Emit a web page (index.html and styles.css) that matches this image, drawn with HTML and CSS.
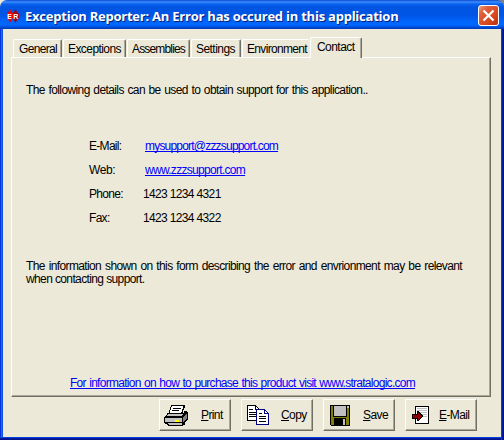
FILE: index.html
```
<!DOCTYPE html>
<html lang="en">
<head>
<meta charset="utf-8">
<title>Exception Reporter</title>
<link rel="stylesheet" href="styles.css">
</head>
<body>
<div class="window">
  <header class="titlebar">
    <svg class="app-icon" width="14" height="16" viewBox="0 0 14 16">
      <path d="M4 1L5.500 4L7 5V10L5.500 12L4 15L2.500 12L1 10V5L2.500 4Z" fill="#f00000"/>
      <path d="M9.500 1L11 4L13 6V10L11 12L9.500 15L8 12L7 10V5L8 4Z" fill="#a80008"/>
      <text x="1.300" y="10.500" class="app-icon-text">E</text>
      <text x="7.300" y="10.500" class="app-icon-text">R</text>
    </svg>
    <h1 class="title">Exception Reporter: An Error has occured in this application</h1>
    <button class="close" aria-label="Close">
      <svg width="13" height="13" viewBox="0 0 13 13"><path d="M1.500 1.500L11.500 11.500M11.500 1.500L1.500 11.500" stroke="#fff" stroke-width="2.200" fill="none"/></svg>
    </button>
  </header>
  <main class="client">
    <nav class="tabs">
      <span class="tab tab-general">General</span>
      <span class="tab tab-exceptions">Exceptions</span>
      <span class="tab tab-assemblies">Assemblies</span>
      <span class="tab tab-settings">Settings</span>
      <span class="tab tab-environment">Environment</span>
      <span class="tab tab-contact active">Contact</span>
    </nav>
    <section class="panel">
      <p class="intro">The following details can be used to obtain support for this application..</p>
      <dl class="details">
        <dt>E-Mail:</dt><dd><a class="mail" href="#">mysupport@zzzsupport.com</a></dd>
        <dt class="web-label">Web:</dt><dd><a class="web" href="#">www.zzzsupport.com</a></dd>
        <dt>Phone:</dt><dd class="number">1423 1234 4321</dd>
        <dt>Fax:</dt><dd class="number">1423 1234 4322</dd>
      </dl>
      <p class="note">The information shown on this form describing the error and envrionment may be relevant when contacting support.</p>
      <a class="purchase" href="#">For information on how to purchase this product visit www.stratalogic.com</a>
    </section>
    <footer class="buttons">
      <button class="button print">
        <svg width="24" height="21" viewBox="0 0 24 21" shape-rendering="crispEdges">
          <path d="M3 8H20V6H23L24 8V14L21 18V20H19V21H4L3 19H1L0 17V12L3 9Z" fill="#000"/>
          <path d="M4 9H19L17 11H2Z" fill="#c0c0c0"/>
          <path d="M1 13H18V17H1ZM4 18H18V20H5Z" fill="#c0c0c0"/>
          <path d="M19 12L23 8V13L19 17Z" fill="#808080"/>
          <path d="M7 0H21V2L18 9H5V7Z" fill="#000"/>
          <path d="M8 1H19V3L17 8H6V7Z" fill="#fff"/>
          <path d="M9 3H17M8 5H15" stroke="#000" stroke-width="1" transform="translate(0 .5)"/>
          <path d="M11 15H15V17H11Z" fill="#ff0"/>
        </svg>
        <span class="caption"><u>P</u>rint</span>
      </button>
      <button class="button copy">
        <svg width="22" height="20" viewBox="0 0 22 20" shape-rendering="crispEdges">
          <path d="M.5 .5H8.500L12.500 4.500V15.500H.5Z" fill="#fff" stroke="#000"/>
          <path d="M8.500 .5V4.500H12.500M2 4.500H6M2 7.500H9M2 9.500H9M2 11.500H9" fill="none" stroke="#000"/>
          <path d="M9.500 4.500H17.500L21.500 8.500V19.500H9.500Z" fill="#fff" stroke="#000080"/>
          <path d="M17.500 4.500V8.500H21.500" fill="none" stroke="#000080"/>
          <path d="M12 8.500H15M12 11.500H19M12 13.500H19M12 16.500H19" stroke="#000"/>
        </svg>
        <span class="caption"><u>C</u>opy</span>
      </button>
      <button class="button save">
        <svg width="20" height="21" viewBox="0 0 20 21" shape-rendering="crispEdges">
          <path d="M0 0H20V21H1L0 20Z" fill="#000"/>
          <path d="M1 1H19V20H1Z" fill="#808000"/>
          <path d="M3 0H17V12H3Z" fill="#000"/>
          <path d="M4 1H16V11H4Z" fill="#c0c0c0"/>
          <path d="M17 1H19V3H17Z" fill="#c0c0c0"/>
          <path d="M4 13H16V21H4Z" fill="#000"/>
          <path d="M13 14H15V20H13Z" fill="#c0c0c0"/>
        </svg>
        <span class="caption"><u>S</u>ave</span>
      </button>
      <button class="button email">
        <svg width="17" height="18" viewBox="0 0 17 18" shape-rendering="crispEdges">
          <path d="M3.500 .5H16.500V17.500H3.500Z" fill="#fff" stroke="#000"/>
          <path d="M5 2.500H15M5 4.500H15M5 6.500H15M10 8.500H15M11 10.500H15" stroke="#c0c0c0"/>
          <path d="M0 8H5V5H6L11 10V11L6 15H5V13H0Z" fill="#000"/>
          <path d="M1 9H6V7L10 10L6 14V12H1Z" fill="#900000"/>
        </svg>
        <span class="caption"><u>E</u>-Mail</span>
      </button>
    </footer>
  </main>
</div>
</body>
</html>
```
FILE: styles.css
```
* { box-sizing: border-box; }
body {
  margin: 0;
  background: linear-gradient(90deg, #ece9d8 50%, #808080 50%);
  font: 12px/14px "Liberation Sans", Arial, sans-serif;
  color: #000;
}
p, dl, dd, h1 { margin: 0; }
button { font: inherit; color: inherit; padding: 0; }
a { color: #00f; text-decoration-skip-ink: none; }
.window {
  width: 504px;
  height: 440px;
  display: flex;
  flex-direction: column;
  border-radius: 7px 7px 0 0;
  overflow: hidden;
  background:
    linear-gradient(90deg, #0831d9 1px, #166aee 1px 2px, #0855dd 2px) 0 29px / 3px 408px no-repeat,
    linear-gradient(90deg, #0441d8 1px, #001da0 1px 2px, #00138c 2px) 501px 29px / 3px 411px no-repeat,
    linear-gradient(#0441d8 1px, #001da0 1px 2px, #00138c 2px) 0 437px / 504px 3px no-repeat;
}
.titlebar {
  flex: none;
  height: 29px;
  padding: 2px 5px 0 6px;
  display: flex;
  align-items: center;
  background: linear-gradient(#0a4ad0 0, #3c8cff 2px, #0a62ee 4px, #0055e2 7px, #0055e5 15px, #0064fa 21px, #0068ff 25px, #0050dc 27px, #0038b8 29px);
}
.app-icon { flex: none; }
.app-icon-text { font: bold 7px "Liberation Sans", sans-serif; fill: #fff; }
.title {
  flex: 1;
  margin-left: 5px;
  font: bold 13px/18px "Open Sans", "Noto Sans", sans-serif;
  letter-spacing: -.23px;
  color: #fff;
  text-shadow: 1px 1px #06207c;
  white-space: nowrap;
}
.close {
  flex: none;
  width: 21px;
  height: 21px;
  border: 1px solid #fff;
  border-radius: 3px;
  background: linear-gradient(135deg, #f0a080 0, #e0603c 25%, #d84820 65%, #b83010 100%);
  display: flex;
  align-items: center;
  justify-content: center;
}
.client {
  flex: 1;
  margin: 0 3px 3px;
  padding: 8px 10px 6px 8px;
  background: #ece9d8;
}
.tabs {
  height: 20px;
  padding-left: 2px;
  display: flex;
  align-items: flex-end;
}
.tab {
  height: 18px;
  padding: 2px 0 0 5px;
  border-left: 1px solid #fff;
  border-top: 1px solid #fff;
  border-right: 1px solid #716f64;
  border-radius: 2px 2px 0 0;
  box-shadow: inset -1px 0 #aca899;
  margin-right: 1px;
  white-space: nowrap;
}
.tab-general { width: 49px; letter-spacing: -.67px; }
.tab-exceptions { width: 63px; padding-left: 4px; letter-spacing: -.57px; }
.tab-assemblies { width: 63px; padding-left: 4px; letter-spacing: -.84px; }
.tab-settings { width: 50px; padding-left: 4px; letter-spacing: -.55px; }
.tab-environment { width: 67px; padding-left: 4px; letter-spacing: -.67px; border-right: 0; box-shadow: none; }
.tab.active {
  position: relative;
  width: 52px;
  height: 21px;
  margin-bottom: -1px;
  padding-left: 6px;
  background: #ece9d8;
  letter-spacing: -.55px;
}
.panel {
  height: 340px;
  padding: 25px 26px 0 14px;
  border: 1px solid #fff;
  border-right-color: #716f64;
  border-bottom-color: #716f64;
  box-shadow: inset -1px -1px #aca899;
}
.intro { letter-spacing: -.6px; word-spacing: .85px; white-space: nowrap; }
.details {
  margin: 37px 0 0 63px;
  display: grid;
  grid-template-columns: 54px auto;
  line-height: 24px;
}
.details dt { letter-spacing: -.7px; }
.details .web-label { letter-spacing: -.4px; }
.details a { margin-left: 2px; }
.mail { letter-spacing: -.8px; }
.web { letter-spacing: -.7px; }
.number { letter-spacing: -.65px; }
.note {
  width: 436px;
  margin-top: 30px;
  line-height: 13px;
  letter-spacing: -.62px;
  text-align: justify;
}
.purchase {
  display: block;
  width: 347px;
  margin: 90px 0 0 44px;
  letter-spacing: -.72px;
  word-spacing: .75px;
  white-space: nowrap;
}
.buttons {
  margin: 2px 14px 0 0;
  display: flex;
  justify-content: flex-end;
  gap: 10px;
}
.button {
  width: 72px;
  height: 32px;
  border: 1px solid #fff;
  border-right-color: #716f64;
  border-bottom-color: #716f64;
  box-shadow: inset -1px -1px #aca899;
  background: #ece9d8;
  display: flex;
  align-items: center;
}
.button svg { flex: none; }
.caption { letter-spacing: -.6px; }
.print { padding-left: 4px; }
.print .caption { margin-left: 13px; }
.copy { padding-left: 5px; }
.copy .caption { margin-left: 12px; }
.save { padding-left: 6px; }
.save .caption { margin-left: 13px; }
.email { padding-left: 6px; }
.email .caption { margin-left: 10px; }
```
